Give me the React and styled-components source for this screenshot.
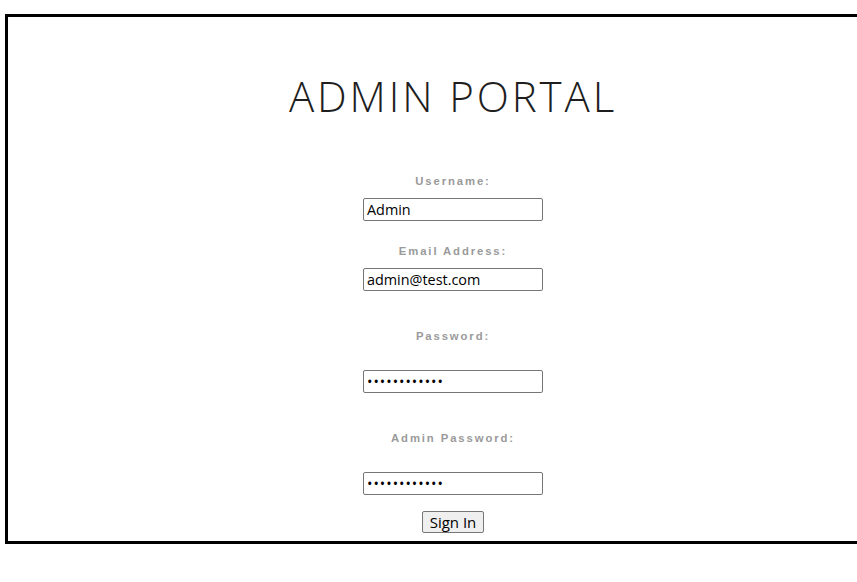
import React from "react";
import styled, { createGlobalStyle } from "styled-components";

const GlobalStyle = createGlobalStyle`
  body {
    margin: 0;
    background: #ffffff;
    font-family: "Open Sans", "Noto Sans", sans-serif;
    overflow: hidden;
  }
`;

const Page = styled.div`
  padding: 14px 0 0 5px;
`;

/* the frame runs off the right side of the window, so no right edge shows */
const Frame = styled.div`
  box-sizing: border-box;
  width: 852px;
  height: 530px;
  border: 3px solid #000000;
  border-right: none;
  padding-left: 41px;
  display: flex;
  flex-direction: column;
  align-items: center;
`;

const Title = styled.h1`
  margin: 54px 0 0;
  font-family: "Open Sans", "Noto Sans", sans-serif;
  font-weight: 300;
  font-size: 42px;
  line-height: 50px;
  letter-spacing: 2.9px;
  color: #1e1e1e;
`;

const Form = styled.form`
  margin-top: 53px;
  display: flex;
  flex-direction: column;
  align-items: center;
`;

const Label = styled.label`
  display: block;
  margin-top: ${(p) => p.$top}px;
  margin-bottom: ${(p) => p.$bottom}px;
  font-family: "Liberation Sans", Arial, sans-serif;
  font-weight: 700;
  font-size: 11.3px;
  line-height: 14px;
  letter-spacing: 1.9px;
  color: #9a9a9a;
`;

const Input = styled.input`
  box-sizing: border-box;
  width: 180px;
  height: 23px;
  padding: 1px 3px;
  border: 1px solid #767676;
  border-radius: 2px;
  font-family: "Open Sans", "Noto Sans", sans-serif;
  font-size: 14.4px;
  letter-spacing: ${(p) => (p.type === "password" ? "1px" : "0")};
  color: #000000;
  outline: none;
`;

const Button = styled.button`
  margin-top: 16px;
  height: 22px;
  padding: 0 7px;
  border: 1px solid #767676;
  border-radius: 2px;
  background: #efefef;
  font-family: "Open Sans", "Noto Sans", sans-serif;
  font-size: 15px;
  line-height: 18px;
  color: #000000;
`;

export default function App() {
  return (
    <Page>
      <GlobalStyle />
      <Frame>
        <Title>ADMIN PORTAL</Title>
        <Form onSubmit={(e) => e.preventDefault()}>
          <Label $top={0} $bottom={10}>Username:</Label>
          <Input type="text" defaultValue="Admin" />
          <Label $top={23} $bottom={10}>Email Address:</Label>
          <Input type="email" defaultValue="admin@test.com" />
          <Label $top={38} $bottom={27}>Password:</Label>
          <Input type="password" defaultValue="password1234" />
          <Label $top={38} $bottom={27}>Admin Password:</Label>
          <Input type="password" defaultValue="password1234" />
          <Button type="submit">Sign In</Button>
        </Form>
      </Frame>
    </Page>
  );
}
